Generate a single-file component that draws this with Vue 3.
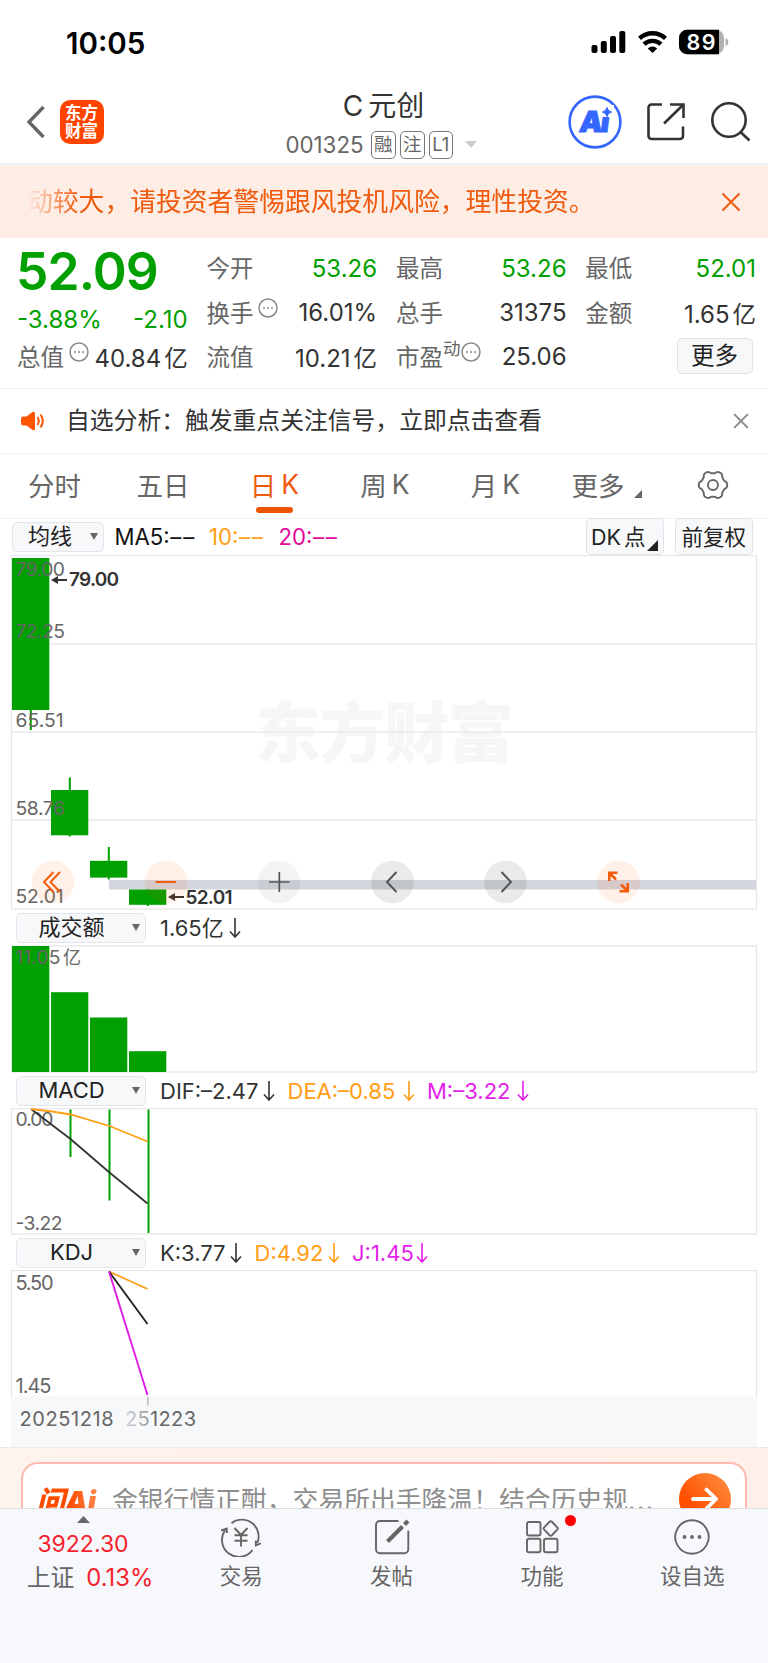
<template>
  <div class="page">
    <!-- 状态栏 -->
    <div class="status-bar">
      <span class="time">10:05</span>
      <svg class="status-icons" width="140" height="28" viewBox="0 0 140 28">
        <rect x="1.5" y="17" width="6" height="8" rx="2" />
        <rect x="10.8" y="13" width="6" height="12" rx="2" />
        <rect x="20" y="8" width="6" height="17" rx="2" />
        <rect x="29.3" y="3" width="6" height="22" rx="2" />
        <g fill="none" stroke="#000" stroke-width="4.4">
          <path d="M49.5 10.4a19 19 0 0 1 26 0" />
          <path d="M54 16.2a12.5 12.5 0 0 1 17 0" />
        </g>
        <path d="M57.8 20.4a7 7 0 0 1 9.4 0L62.5 25z" />
        <rect x="89" y="1.8" width="45" height="24.4" rx="8" fill="#b0b0b0" />
        <path d="M97 1.8h32v24.4H97a8 8 0 0 1-8-8v-8.4a8 8 0 0 1 8-8z" />
        <path d="M135.5 10q2.8 1 2.8 4t-2.8 4z" fill="#b0b0b0" />
        <text x="96.5" y="21.600" textLength="29" class="battery">89</text>
      </svg>
    </div>

    <!-- 标题栏 -->
    <header class="header">
      <svg class="back" width="20" height="34" viewBox="0 0 20 34">
        <path d="M17.500 2L3 17l14.500 15" fill="none" stroke="#666" stroke-width="3.4" />
      </svg>
      <div class="logo"><span>东方</span><span>财富</span></div>
      <div class="heading">
        <h1>C<span>元创</span></h1>
        <div class="code">
          <span class="num">001325</span>
          <i v-for="t in ['融', '注', 'L1']" :key="t" class="tag">{{ t }}</i>
          <span class="caret"></span>
        </div>
      </div>
      <svg class="ai" width="54" height="54" viewBox="0 0 54 54">
        <circle cx="27" cy="27" r="25.4" fill="none" stroke="#36f" stroke-width="2.6" />
        <text x="15" y="37" textLength="30" transform="skewX(-7)">Ai</text>
        <rect x="33" y="10" width="13" height="12" fill="#fff" />
        <path d="M39 12.5l1.500 3 3 1.600-3 1.500-1.500 3-1.500-3-3-1.500 3-1.600z" fill="#36f" stroke="#36f" />
      </svg>
      <svg class="share" width="40" height="40" viewBox="0 0 40 40" fill="none" stroke="#333" stroke-width="2.6">
        <path d="M16 2.5H5.5a3 3 0 0 0-3 3V34a3 3 0 0 0 3 3H34a3 3 0 0 0 3-3V24.5" />
        <path d="M24 2.5h13.500V16M37 3L18 21.5" />
      </svg>
      <svg class="search" width="40" height="40" viewBox="0 0 40 40" fill="none" stroke="#333" stroke-width="2.6">
        <circle cx="18" cy="18" r="16.7" />
        <path d="M29.5 30l9 8.5" />
      </svg>
    </header>

    <div class="notice">
      <p>动较大，请投资者警惕跟风投机风险，理性投资。</p>
      <svg width="20" height="20" viewBox="0 0 20 20">
        <path d="M1.5 1.5l17 17M18.5 1.5l-17 17" stroke="#ef5a0c" stroke-width="2" />
      </svg>
    </div>

    <!-- 行情数据 -->
    <section class="quote">
      <div class="summary">
        <strong>52.09</strong>
        <div class="change"><span>-3.88%</span><span>-2.10</span></div>
        <div class="cell">
          <label>总值</label>
          <svg class="more-dot" viewBox="0 0 20 20"><circle cx="10" cy="10" r="9" /><path d="M5 10h2m2 0h2m2 0h2" /></svg>
          <span class="value">40.84<em>亿</em></span>
        </div>
      </div>
      <div v-for="(col, i) in quotes" :key="i" class="column">
        <div v-for="q in col" :key="q.label" class="cell">
          <label>{{ q.label }}</label>
          <sup v-if="q.sup">{{ q.sup }}</sup>
          <svg v-if="q.tip" class="more-dot" :class="{ tight: q.sup }" viewBox="0 0 20 20"><circle cx="10" cy="10" r="9" /><path d="M5 10h2m2 0h2m2 0h2" /></svg>
          <span class="value" :class="{ down: q.down }">{{ q.value }}<em v-if="q.unit">{{ q.unit }}</em></span>
        </div>
        <div v-if="i === 2" class="cell"><button class="more-btn">更多</button></div>
      </div>
    </section>

    <div class="insight">
      <svg width="26" height="22" viewBox="0 0 26 22">
        <path d="M1 9q0-2.5 2.5-2.5h3L12.500 2Q15 1 15 3.500v15q0 2.500-2.500 1.500L6.500 15.500h-3Q1 15.500 1 13z" fill="#ff5500" />
        <path d="M17.5 7q2.5 4 0 8M20.5 4.5q4.5 6.5 0 13" fill="none" stroke="#ff5500" stroke-width="2" />
      </svg>
      <p>自选分析：触发重点关注信号，立即点击查看</p>
      <svg class="close" width="16" height="16" viewBox="0 0 16 16">
        <path d="M1.200 1.200l13.600 13.600M14.800 1.200L1.200 14.800" stroke="#888" stroke-width="1.900" />
      </svg>
    </div>

    <!-- 周期切换 -->
    <nav class="tabs">
      <div v-for="t in tabs" :key="t.cn" class="tab" :class="{ active: t.active }">
        <span>{{ t.cn }}</span><span v-if="t.en" class="en">{{ t.en }}</span>
        <svg v-if="t.menu" class="corner" width="8" height="8"><path d="M8 0v8H0z" fill="#666" /></svg>
      </div>
      <div class="tab setting">
        <svg width="32" height="32" viewBox="-16 -16 32 32" fill="none" stroke="#666" stroke-width="1.9">
          <path :d="gearPath" />
          <circle r="5" />
        </svg>
      </div>
    </nav>

    <!-- 均线 -->
    <div class="ma-row">
      <div class="select small"><span>均线</span><i></i></div>
      <div class="ma-values">
        <span class="ma5">MA5:<b>––</b></span>
        <span class="ma10">10:<b>––</b></span>
        <span class="ma20">20:<b>––</b></span>
      </div>
      <button class="dk">DK<span>点</span><svg width="11" height="11"><path d="M11 0v11H0z" fill="#222" /></svg></button>
      <button class="fq">前复权</button>
    </div>

    <!-- K线 -->
    <svg class="chart" width="768" height="355" viewBox="0 0 768 355">
      <text x="255" y="202" textLength="259" class="watermark">东方财富</text>
      <path d="M11.5 88.8h745M11.5 177.300h745M11.5 265h745" stroke="#e8eaf1" stroke-width="1.6" />
      <rect x="11.5" y=".5" width="745" height="353.5" class="frame" />
      <rect x="109" y="325" width="647" height="9.5" fill="#d3d6dc" />
      <g v-for="c in candles" :key="c.x" fill="#00a000">
        <rect :x="c.x" :y="c.open" width="37.3" :height="c.close - c.open" />
        <rect :x="c.x + 17.8" :y="c.high" width="2" :height="c.low - c.high" />
      </g>
      <g class="axis">
        <text v-for="l in priceLabels" :key="l.text" x="15.5" :y="l.y" :textLength="l.w">{{ l.text }}</text>
      </g>
      <g class="mark">
        <path d="M54 25h13M171 342h13" stroke="#333" stroke-width="1.8" />
        <path d="M58 21l-7 4 7 4zM175 338l-7 4 7 4z" />
        <text x="69" y="31.3" textLength="50">79.00</text>
        <text x="185.5" y="349.300" textLength="47">52.01</text>
      </g>
      <g v-for="t in tools" :key="t.x" :transform="`translate(${t.x} 327)`" fill="none">
        <circle r="21.3" :fill="t.hot ? '#ff5a00' : '#333'" :fill-opacity="t.alpha" />
        <path :d="t.d" :stroke="t.hot ? '#f35c0c' : '#555'" :stroke-width="t.width || 2" />
      </g>
    </svg>

    <div class="ind-row">
      <div class="select"><span>成交额</span><i></i></div>
      <div class="ind-values">
        <span class="ind"><b style="width: 62px">1.65亿</b><svg class="arrow" viewBox="0 0 12 20"><path d="M6 0v19M1 13.5l5 5.5 5-5.5" /></svg></span>
      </div>
    </div>
    <svg class="chart" width="768" height="128" viewBox="0 0 768 128">
      <rect x="11.5" y="1" width="745" height="126" class="frame" />
      <rect v-for="v in volumes" :key="v.x" :x="v.x" :y="v.y" width="37.3" :height="127 - v.y" fill="#00a000" />
      <g class="axis">
        <text x="15.5" y="19" textLength="45">11.05</text>
        <text x="63" y="19" class="cn">亿</text>
      </g>
    </svg>

    <div class="ind-row">
      <div class="select"><span>MACD</span><i></i></div>
      <div class="ind-values">
        <span v-for="m in macd" :key="m.text" class="ind" :style="{ color: m.color }">
          <b :style="{ width: m.w + 'px' }">{{ m.text }}</b><svg class="arrow" viewBox="0 0 12 20"><path d="M6 0v19M1 13.5l5 5.5 5-5.5" /></svg>
        </span>
      </div>
    </div>
    <svg class="chart" width="768" height="127" viewBox="0 0 768 127">
      <rect x="11.5" y=".5" width="745" height="125.5" class="frame" />
      <g class="axis">
        <text x="15.5" y="18" textLength="38">0.00</text>
        <text x="15.5" y="121.5" textLength="47">-3.22</text>
      </g>
      <path d="M70.5 1.5V49M109.5 1.5V92.5M148.5 1.5V125" stroke="#00a000" stroke-width="2" />
      <g fill="none" stroke-width="1.8">
        <polyline points="31,1 70.5,31 109.5,64.5 147.5,95.5" stroke="#333" />
        <polyline points="31,1 52,3.5 70.5,6.5 109.5,18 147.5,33.5" stroke="#ff9d14" />
      </g>
    </svg>

    <div class="ind-row">
      <div class="select"><span>KDJ</span><i></i></div>
      <div class="ind-values">
        <span v-for="k in kdj" :key="k.text" class="ind" :style="{ color: k.color }">
          <b :style="{ width: k.w + 'px' }">{{ k.text }}</b><svg class="arrow" viewBox="0 0 12 20"><path d="M6 0v19M1 13.5l5 5.5 5-5.5" /></svg>
        </span>
      </div>
    </div>
    <svg class="chart" width="768" height="177" viewBox="0 0 768 177">
      <defs>
        <linearGradient id="dateFade" gradientUnits="userSpaceOnUse" x1="122" y1="0" x2="153" y2="0">
          <stop offset="0" stop-color="#666" stop-opacity=".2" />
          <stop offset=".8" stop-color="#666" stop-opacity=".6" />
          <stop offset="1" stop-color="#666" />
        </linearGradient>
      </defs>
      <rect x="11.5" y=".5" width="745" height="135" class="frame" />
      <rect x="11" y="126.3" width="746" height="51" fill="#f7f8fa" />
      <g fill="none" stroke-width="1.9">
        <path d="M109 1.5l38.5 17.5" stroke="#ff9d14" />
        <path d="M109 1.5L147.5 54" stroke="#222" />
        <path d="M109 1.5L147.5 125" stroke="#df1be4" />
        <path d="M147.8 126.5v9" stroke="#b5b5b8" stroke-width="1.4" />
      </g>
      <g class="axis date">
        <text x="15.5" y="19.5" textLength="38">5.50</text>
        <text x="15.5" y="122.5" textLength="36">1.45</text>
        <text x="19.5" y="155.500" textLength="94">20251218</text>
        <text x="125" y="155.500" textLength="71" class="faded">251223</text>
      </g>
    </svg>

    <!-- 问AI -->
    <div class="ask">
      <div class="ask-card">
        <span class="ask-logo">问Ai</span>
        <p>金银行情正酣，交易所出手降温！结合历史规<span>...</span></p>
        <div class="go">
          <svg width="28" height="24" viewBox="0 0 28 24"><path d="M2 12h23M15.500 2.500L25 12l-9.500 9.500" fill="none" stroke="#fff" stroke-width="3.800" stroke-linecap="round" stroke-linejoin="round" /></svg>
        </div>
      </div>
    </div>

    <!-- 底部导航 -->
    <footer class="bottom">
      <div class="index">
        <svg width="13" height="7"><path d="M6.5 0L13 7H0z" fill="#666" /></svg>
        <span class="point">3922.30</span>
        <div class="rate"><label>上证</label><span>0.13%</span></div>
      </div>
      <div v-for="n in navs" :key="n.label" class="nav">
        <svg width="40" height="40" viewBox="0 0 40 40" fill="none" stroke="#666" stroke-width="1.9">
          <path :d="n.d" />
          <path v-if="n.bold" :d="n.bold" stroke-width="4.2" />
          <path v-if="n.dots" :d="n.dots" stroke-width="3.8" stroke-linecap="round" />
        </svg>
        <span>{{ n.label }}</span>
        <i v-if="n.badge" class="badge"></i>
      </div>
    </footer>
  </div>
</template>

<script setup>
// 行情三列
const quotes = [
  [
    { label: '今开', value: '53.26', down: true },
    { label: '换手', value: '16.01%', tip: true },
    { label: '流值', value: '10.21', unit: '亿' }
  ],
  [
    { label: '最高', value: '53.26', down: true },
    { label: '总手', value: '31375' },
    { label: '市盈', sup: '动', value: '25.06', tip: true }
  ],
  [
    { label: '最低', value: '52.01', down: true },
    { label: '金额', value: '1.65', unit: '亿' }
  ]
]

const tabs = [
  { cn: '分时' },
  { cn: '五日' },
  { cn: '日', en: 'K', active: true },
  { cn: '周', en: 'K' },
  { cn: '月', en: 'K' },
  { cn: '更多', menu: true }
]

// 齿轮外轮廓，六个圆角齿
const gearPoints = []
for (let i = 0; i < 120; i++) {
  const a = (i / 120) * Math.PI * 2
  const r = 13 + 1.3 * Math.tanh(1.6 * Math.cos(6 * a))
  gearPoints.push(`${(r * Math.cos(a)).toFixed(2)} ${(r * Math.sin(a)).toFixed(2)}`)
}
const gearPath = 'M' + gearPoints.join('L') + 'Z'

// K线蜡烛
const candles = [
  { x: 12, open: 3, close: 155, high: 3, low: 175 },
  { x: 51, open: 235, close: 280.3, high: 222.5, low: 281.5 },
  { x: 90, open: 305.8, close: 322.6, high: 292, low: 324.5 },
  { x: 129, open: 334.5, close: 349.8, high: 334.5, low: 351 }
]

const priceLabels = [
  { text: '79.00', y: 20.5, w: 49.5 },
  { text: '72.25', y: 83, w: 49.5 },
  { text: '65.51', y: 171.5, w: 48 },
  { text: '58.76', y: 259.5, w: 49.5 },
  { text: '52.01', y: 348, w: 48 }
]

// 图表浮动按钮
const tools = [
  { x: 53, hot: true, alpha: 0.09, d: 'M0.5 -10L-9 0L0.5 10M7 -10L-2.5 0L7 10' },
  { x: 166, hot: true, alpha: 0.09, d: 'M-10.5 0H10' },
  { x: 279, alpha: 0.06, d: 'M-10 0H10.5M0.3 -10V10', width: 1.7 },
  { x: 392.5, alpha: 0.1, d: 'M4 -10L-5.5 0L4 10' },
  { x: 505.5, alpha: 0.1, d: 'M-4 -10L5.5 0L-4 10' },
  { x: 618.5, hot: true, alpha: 0.09, d: 'M-9.2 -1V-9.2H-1M-9 -9L-2.5 -2.500M9.2 1V9.2H1M9 9L2.5 2.5', width: 2.6 }
]

const volumes = [
  { x: 12, y: 1 },
  { x: 51, y: 47.2 },
  { x: 90, y: 72.5 },
  { x: 129, y: 106.2 }
]

const macd = [
  { text: 'DIF:–2.47', w: 96, color: '#333' },
  { text: 'DEA:–0.85', w: 108, color: '#ff9d14' },
  { text: 'M:–3.22', w: 83, color: '#e31ee8' }
]

const kdj = [
  { text: 'K:3.77', w: 63, color: '#333' },
  { text: 'D:4.92', w: 66, color: '#ff9d14' },
  { text: 'J:1.45', w: 57, color: '#e31ee8' }
]

const navs = [
  {
    label: '交易',
    d: 'M10.5 6.2A16.8 16.8 0 0 1 36.3 26M34.7 23.5L34.9 28.3L40 26.3M0 13.5L5.7 11.5L6 16M4.3 13A16.8 16.8 0 0 0 31.5 33M13.5 11L20 18L26.5 11M20 18V29.5M13.5 18.3H26.5M13.5 23.8H26.5'
  },
  {
    label: '发帖',
    d: 'M26.5 4H8A4 4 0 0 0 4 8V32.3A4 4 0 0 0 8 36.3H32.3A4 4 0 0 0 36.3 32.3V13.5',
    bold: 'M15.5 24.5L30.5 9.5M32.5 7.5L36 4'
  },
  {
    label: '功能',
    badge: true,
    d: 'M7 5H16.5Q18.5 5 18.5 7V16.5Q18.5 18.5 16.5 18.5H7Q5 18.5 5 16.5V7Q5 5 7 5ZM7 21.8H16.5Q18.5 21.8 18.5 23.8V33.3Q18.5 35.3 16.5 35.3H7Q5 35.3 5 33.3V23.8Q5 21.8 7 21.8ZM24 21.8H33.5Q35.5 21.8 35.5 23.8V33.3Q35.5 35.3 33.5 35.3H24Q22 35.3 22 33.3V23.8Q22 21.8 24 21.8ZM27.5 4.8Q28.7 3.8 29.9 4.8L35.4 10.6Q36.2 11.5 35.4 12.4L29.9 18.2Q28.7 19.2 27.5 18.2L22 12.4Q21.2 11.5 22 10.6Z'
  },
  {
    label: '设自选',
    d: 'M20 3.3A16.7 16.7 0 1 1 19.9 3.3Z',
    dots: 'M12.5 20h.01M20 20h.01M27.5 20h.01'
  }
]
</script>

<style>
body {
  margin: 0;
  background: #fff;
}
</style>

<style scoped>
.page {
  width: 768px;
  height: 1663px;
  overflow: hidden;
  display: flex;
  flex-direction: column;
  background: #fff;
  color: #333;
  font-family: Inter, "Noto Sans CJK SC", sans-serif;
  font-weight: 400;
}

.page > * {
  flex: none;
  box-sizing: border-box;
}

p,
h1 {
  margin: 0;
  font-weight: 400;
  white-space: nowrap;
}

i,
em,
b {
  font-style: normal;
  font-weight: 400;
}

svg {
  flex: none;
  display: block;
}

button {
  box-sizing: border-box;
  padding: 0;
  font: inherit;
  color: #222;
  background: #f7f8fa;
  border: 1.5px solid #e0e2e9;
  border-radius: 5px;
  white-space: nowrap;
}

/* 状态栏 */
.status-bar {
  height: 80px;
  padding: 5px 38px 0 66px;
  display: flex;
  align-items: center;
  justify-content: space-between;
  color: #000;
}

.time {
  font-size: 29.5px;
  font-weight: 600;
}

.status-icons {
  margin-top: -1px;
}

.battery {
  fill: #fff;
  font-size: 21.5px;
  font-weight: 600;
}

/* 标题栏 */
.header {
  height: 85px;
  padding-left: 26px;
  display: flex;
  align-items: center;
  border-bottom: 2px solid #eeeff2;
}

.logo {
  box-sizing: border-box;
  width: 44px;
  height: 44px;
  margin-left: 13.5px;
  padding-top: 4px;
  display: flex;
  flex-direction: column;
  align-items: center;
  border-radius: 10px;
  background: #ff4400;
  color: #fff;
  font-size: 16.5px;
  font-weight: 700;
  line-height: 18px;
}

.heading {
  width: 280px;
  margin: 8px 0 0 140px;
  display: flex;
  flex-direction: column;
  align-items: center;
}

h1 {
  font-size: 28px;
  line-height: 38px;
  display: flex;
  gap: 5px;
}

.code {
  height: 40px;
  margin-left: -5px;
  display: flex;
  align-items: center;
  color: #666;
}

.num {
  margin-right: 7px;
  font-size: 22.3px;
}

.tag {
  box-sizing: border-box;
  min-width: 24.5px;
  height: 28px;
  margin-right: 3.5px;
  padding: 0 2.5px;
  border: 1.3px solid #777;
  border-radius: 5px;
  text-align: center;
  font-size: 18.5px;
  line-height: 25px;
}

.caret {
  margin-left: 8px;
  border: 6.5px solid transparent;
  border-top: 7px solid #ccc;
  border-bottom: 0;
}

.ai {
  margin-left: 44.5px;
}

.ai text {
  fill: #36f;
  stroke: #36f;
  stroke-width: 1px;
  font-size: 29px;
  font-weight: 900;
}

.share {
  margin-left: 23.5px;
}

.search {
  margin-left: 25px;
}

/* 公告 */
.notice {
  height: 73px;
  padding: 0 27px;
  display: flex;
  align-items: center;
  justify-content: space-between;
  background: #feede5;
  color: #ef5a0c;
}

.notice p {
  margin-top: -5px;
  font-size: 25.8px;
  -webkit-mask-image: linear-gradient(90deg, transparent, #000 50px);
  mask-image: linear-gradient(90deg, transparent, #000 50px);
}

/* 行情 */
.quote {
  height: 151px;
  padding: 0 12px 0 17px;
  display: grid;
  grid-template-columns: repeat(4, 1fr);
  column-gap: 18.8px;
  border-bottom: 1.5px solid #f0f1f4;
}

.summary,
.column {
  min-width: 0;
  display: flex;
  flex-direction: column;
}

.column {
  padding-top: 8px;
}

.summary strong {
  height: 66px;
  margin-left: -1px;
  font-size: 51.5px;
  font-weight: 600;
  line-height: 67px;
  letter-spacing: -0.9px;
  color: #00a000;
}

.change {
  height: 31px;
  display: flex;
  align-items: center;
  justify-content: space-between;
  font-size: 24px;
  color: #00a000;
}

.cell {
  height: 44.4px;
  display: flex;
  align-items: center;
  white-space: nowrap;
  font-size: 23.5px;
}

.cell label {
  margin-top: -2px;
  color: #666;
}

.cell sup {
  margin: 0 0 15px 0;
  font-size: 17.5px;
  line-height: 18px;
  color: #666;
}

.value {
  margin-left: auto;
  font-size: 24px;
}

.value em {
  margin-left: 3px;
  font-size: 23.5px;
}

.down {
  color: #00a000;
}

.more-dot {
  width: 20px;
  height: 20px;
  margin: 0 0 10px 5px;
  fill: none;
  stroke: #888;
  stroke-width: 1.5;
}

.more-dot.tight {
  margin-left: 1px;
}

.more-btn {
  width: 76px;
  height: 36px;
  margin: 0 3.5px 2px auto;
  font-size: 23.5px;
  line-height: 33px;
}

/* 自选分析 */
.insight {
  height: 65px;
  padding: 0 19px 1px 20px;
  display: flex;
  align-items: center;
  border-bottom: 1.5px solid #f0f1f4;
}

.insight p {
  margin: -4px 0 0 20px;
  font-size: 23.8px;
}

.close {
  margin-left: auto;
}

/* 周期 */
.tabs {
  height: 64.5px;
  display: grid;
  grid-template-columns: 109px 108px 115px 106px 115px 107px 108px;
  border-bottom: 1.5px solid #f0f1f4;
}

.tab {
  position: relative;
  padding-bottom: 3px;
  display: flex;
  align-items: center;
  justify-content: center;
  font-size: 26.5px;
  color: #666;
}

.tab .en {
  margin-left: 5px;
}

.tab.active {
  color: #ef5a0c;
}

.tab.active::after {
  content: "";
  position: absolute;
  left: 39px;
  bottom: 5px;
  width: 37px;
  height: 6px;
  border-radius: 3px;
  background: #ee5300;
}

.tab.setting {
  padding: 0 2px 2px 0;
}

.corner {
  margin: 20px 0 0 9px;
}

/* 均线行 */
.ma-row {
  height: 36.5px;
  padding: 0 15.5px 0 11.5px;
  display: flex;
  align-items: center;
}

.select {
  box-sizing: border-box;
  width: 130px;
  height: 30px;
  padding: 0 5px 0 0;
  display: flex;
  align-items: center;
  background: #f7f8fa;
  border: 1.5px solid #e3e5eb;
  border-radius: 5px;
  font-size: 22px;
  color: #222;
}

.select span {
  flex: 1;
  padding-right: 5px;
  text-align: center;
  line-height: 25px;
}

.select i {
  border: 4.8px solid transparent;
  border-top: 7.5px solid #666;
  border-bottom: 0;
}

.select.small {
  width: 92px;
}

.select.small span {
  padding-right: 2px;
}

.ma-values {
  margin-left: 11px;
  display: flex;
  font-size: 22.2px;
}

.ma-values b {
  letter-spacing: 1.8px;
  margin-left: 0.5px;
}

.ma5 {
  width: 94.5px;
  color: #111;
}

.ma10 {
  width: 69.5px;
  color: #ff9d14;
}

.ma20 {
  color: #e6089a;
}

.dk,
.fq {
  width: 77.5px;
  height: 37px;
  font-size: 21.5px;
  line-height: 34px;
}

.dk {
  margin-left: auto;
  display: flex;
  align-items: center;
  padding-left: 4px;
}

.dk span {
  margin-left: 3px;
}

.dk svg {
  margin: 18px 0 0 2px;
}

.fq {
  margin-left: 11.5px;
}

/* 图表 */
.frame {
  fill: none;
  stroke: #e6e7ec;
  stroke-width: 1.3;
}

.watermark {
  font-size: 66px;
  font-weight: 900;
  fill: #f6f6f6;
}

.axis text {
  font-size: 19.3px;
  fill: #666;
}

.axis .cn {
  font-size: 18px;
}

.axis.date text {
  font-size: 20px;
}

.axis.date .faded {
  fill: url(#dateFade);
}

.mark {
  fill: #333;
}

.mark text {
  font-size: 19px;
  font-weight: 600;
}

.ind-row {
  height: 35px;
  padding-left: 15.5px;
  display: flex;
  align-items: center;
}

.ind-values {
  margin-left: 14.5px;
  display: flex;
  gap: 12.5px;
}

.ind {
  display: flex;
  align-items: center;
  font-size: 22px;
  line-height: 26px;
  white-space: nowrap;
}

.arrow {
  width: 12px;
  height: 20px;
  margin-left: 7px;
  fill: none;
  stroke: currentColor;
  stroke-width: 1.6;
}

/* 问AI */
.ask {
  height: 61px;
  padding: 14px 21px 0;
  overflow: hidden;
  border-top: 1.5px solid #e8e9ed;
  background: linear-gradient(90deg, #fff3ee, #fff0e9);
}

.ask-card {
  box-sizing: border-box;
  height: 76px;
  padding: 0 14px 3px 13px;
  display: flex;
  align-items: center;
  background: #fff;
  border: 2px solid #ffb9ae;
  border-radius: 17px;
}

.ask-logo {
  width: 66px;
  font-size: 29px;
  font-weight: 900;
  font-style: italic;
  letter-spacing: -0.3px;
  color: transparent;
  background: linear-gradient(90deg, #ff4d00 50%, #ff9055);
  -webkit-background-clip: text;
  background-clip: text;
}

.ask-card p {
  margin-left: 10px;
  font-size: 25.8px;
  color: #8e8e8e;
}

.ask-card p span {
  letter-spacing: 1.5px;
}

.go {
  width: 52px;
  height: 52px;
  margin-left: auto;
  display: flex;
  align-items: center;
  justify-content: center;
  border-radius: 50%;
  background: linear-gradient(50deg, #ff5000 30%, #ff9545);
}

/* 底部 */
.bottom {
  height: 155px;
  display: grid;
  grid-template-columns: 166px repeat(4, 150.4px);
  background: #f7f8fb;
  border-top: 1.5px solid #dcdde0;
}

.index {
  padding-top: 7px;
  display: flex;
  flex-direction: column;
  align-items: center;
  font-size: 23px;
  color: #f5222d;
}

.point {
  margin-top: 5px;
  line-height: 33px;
}

.rate {
  margin-left: 14px;
  display: flex;
  gap: 12px;
  font-size: 23.8px;
  line-height: 33px;
}

.rate label {
  color: #666;
}

.nav {
  position: relative;
  padding-top: 8px;
  display: flex;
  flex-direction: column;
  align-items: center;
  font-size: 21.5px;
  line-height: 39px;
  color: #666;
}

.badge {
  position: absolute;
  left: 98px;
  top: 6px;
  width: 11px;
  height: 11px;
  border-radius: 50%;
  background: #f00;
}
</style>
